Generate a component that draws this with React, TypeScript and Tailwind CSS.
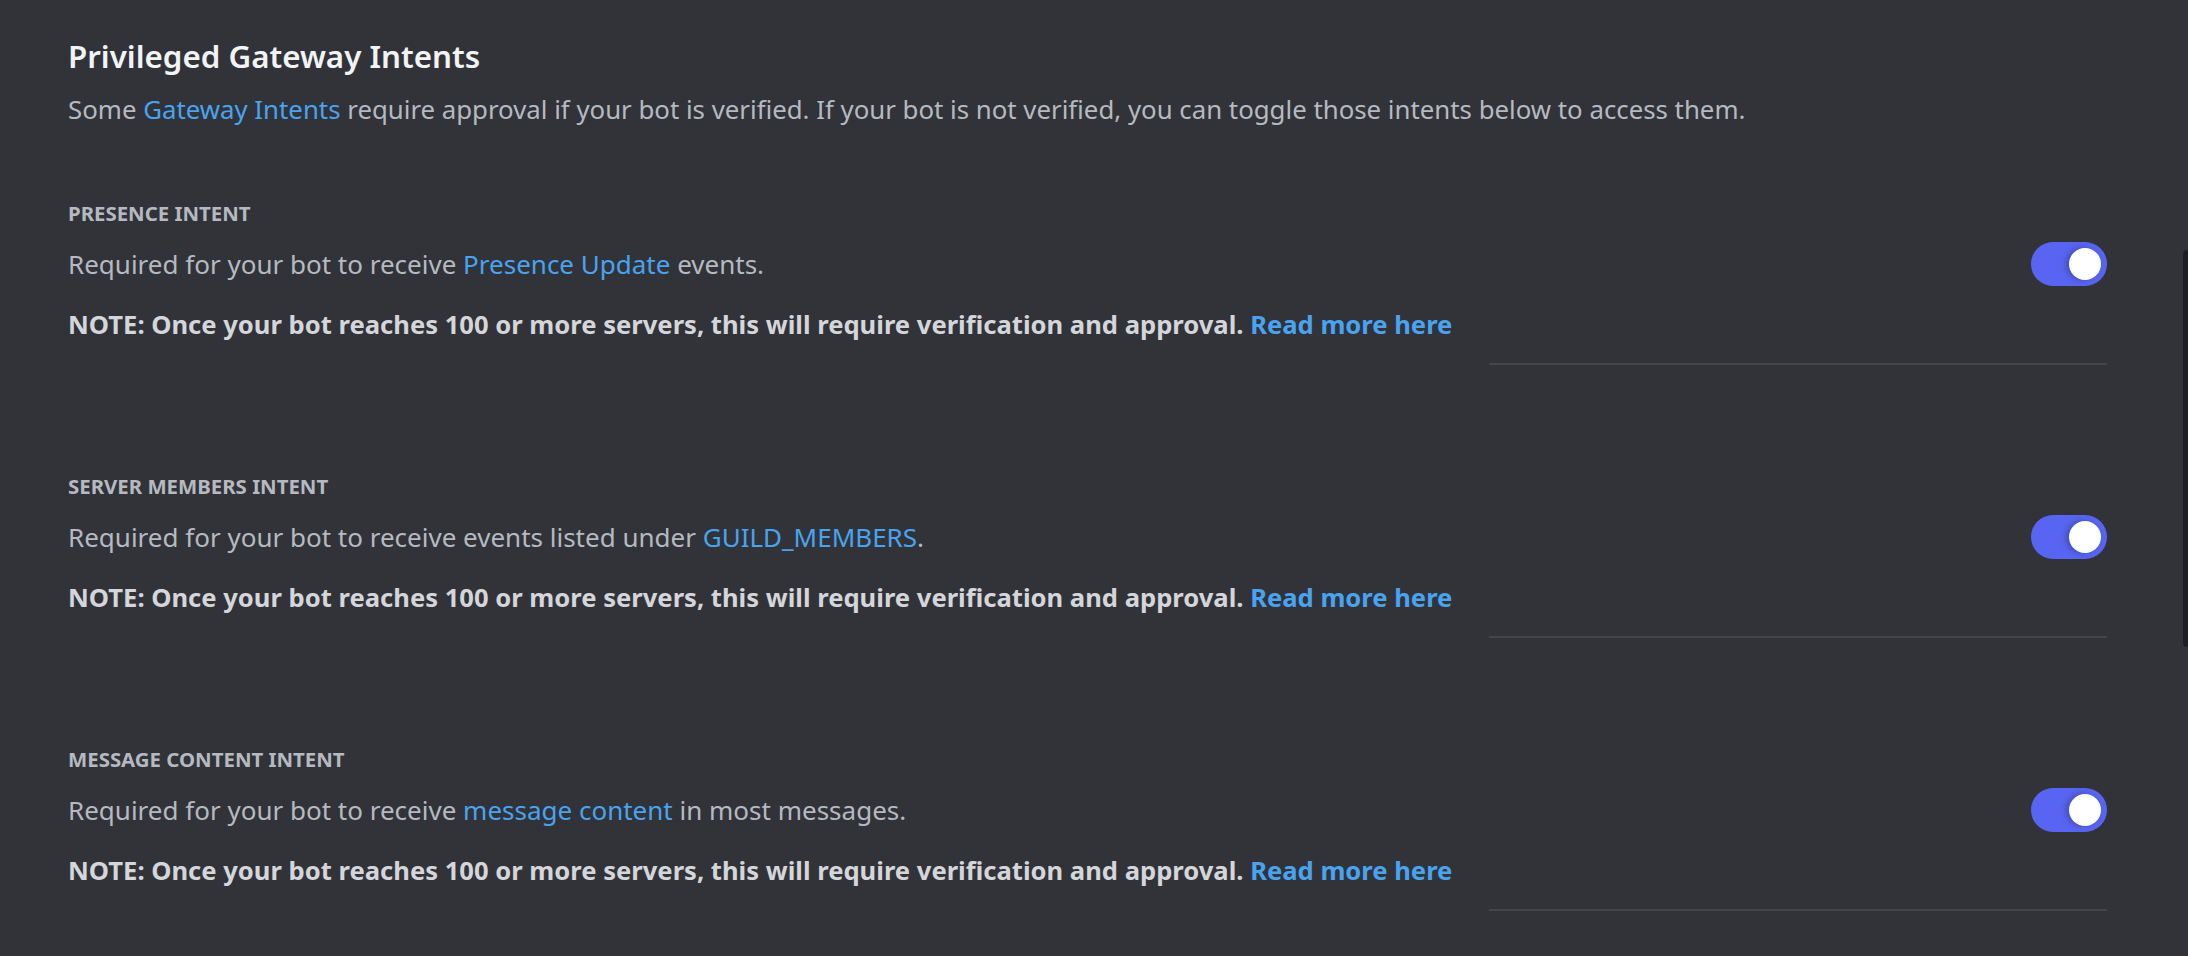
import React from "react";

type Intent = {
  label: string;
  before: string;
  link: string;
  after: string;
};

const intents: Intent[] = [
  {
    label: "PRESENCE INTENT",
    before: "Required for your bot to receive ",
    link: "Presence Update",
    after: " events.",
  },
  {
    label: "SERVER MEMBERS INTENT",
    before: "Required for your bot to receive events listed under ",
    link: "GUILD_MEMBERS",
    after: ".",
  },
  {
    label: "MESSAGE CONTENT INTENT",
    before: "Required for your bot to receive ",
    link: "message content",
    after: " in most messages.",
  },
];

function Toggle() {
  return (
    <div className="w-[76px] h-[44px] rounded-full bg-[#5865f2] flex items-center justify-end pr-[6px] shrink-0">
      <div className="w-[32px] h-[32px] rounded-full bg-white shadow-[-3px_0_6px_rgba(0,0,0,0.25)]" />
    </div>
  );
}

function IntentSection({ intent, first }: { intent: Intent; first: boolean }) {
  return (
    <section className={first ? "mt-[76px]" : "mt-[109px]"}>
      <h3 className="text-[20.4px] leading-[24px] font-bold text-[#b5bac1]">
        {intent.label}
      </h3>

      <div className="mt-[17px] h-[44px] flex items-center justify-between">
        <p className="text-[26px] leading-[32px] text-[#b5bac1]">
          {intent.before}
          <a className="text-[#4aa3ef] cursor-pointer">{intent.link}</a>
          {intent.after}
        </p>
        <Toggle />
      </div>

      <p className="mt-[23px] text-[25.6px] leading-[32px] font-bold text-[#d4d6da]">
        NOTE: Once your bot reaches 100 or more servers, this will require verification and approval.{" "}
        <a className="text-[#4aa3ef] cursor-pointer">Read more here</a>
      </p>

      <div className="mt-[22px] flex justify-end">
        <div className="w-[618px] h-[2px] bg-[#43454b]" />
      </div>
    </section>
  );
}

export default function App() {
  return (
    <div
      className="relative min-h-[956px] w-full bg-[#313338] pl-[68px] pr-[81px] pt-[36px] overflow-hidden"
      style={{ fontFamily: '"Noto Sans", "Open Sans", sans-serif' }}
    >
      {/* Header */}
      <h2 className="text-[31.3px] leading-[40px] font-semibold text-[#f2f3f5]">
        Privileged Gateway Intents
      </h2>
      <p className="mt-[17px] text-[25.8px] leading-[32px] text-[#b5bac1]">
        Some <a className="text-[#4aa3ef] cursor-pointer">Gateway Intents</a> require approval if your
        bot is verified. If your bot is not verified, you can toggle those intents below to access them.
      </p>

      {intents.map((intent, i) => (
        <IntentSection key={intent.label} intent={intent} first={i === 0} />
      ))}

      {/* scrollbar thumb */}
      <div className="absolute right-0 top-[250px] w-[5px] h-[397px] rounded-l-[4px] bg-[#1e1f22]" />
    </div>
  );
}
